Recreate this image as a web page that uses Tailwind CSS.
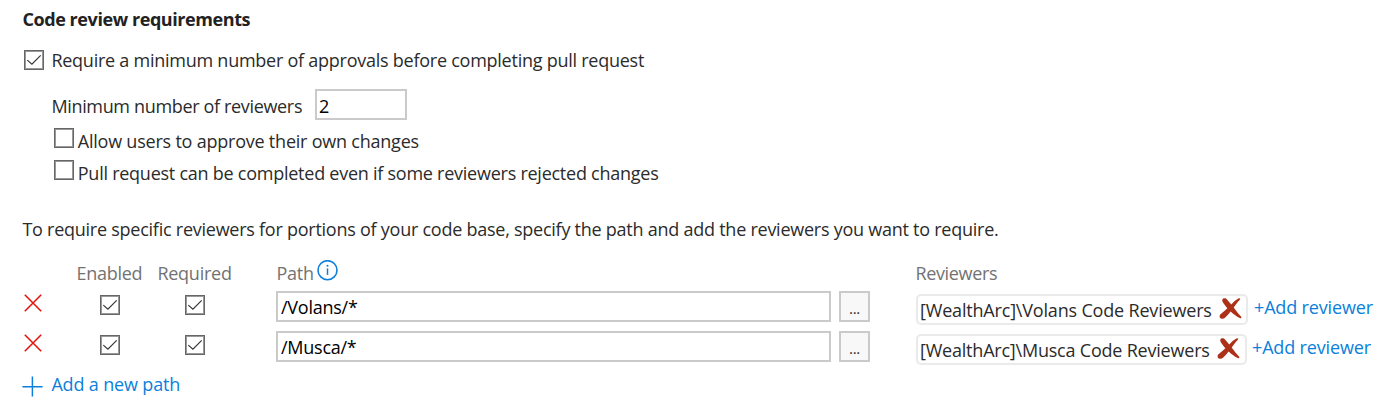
<!DOCTYPE html>
<html lang="en">
<head>
<meta charset="utf-8">
<title>Code review requirements</title>
<script src="https://cdn.jsdelivr.net/npm/@tailwindcss/browser@4"></script>
</head>
<body class="bg-white">
<svg class="hidden">
  <symbol id="check" viewBox="0 0 20 20"><path d="M3.3 10.1 L7.9 14.1 L16.7 5.3" fill="none" stroke="#333" stroke-width="1.15"/></symbol>
  <symbol id="cross" viewBox="0 0 18 18"><path d="M.8 .8 L17.2 17.2 M17.2 .8 L.8 17.2" fill="none" stroke="#e3170d" stroke-width="1.6"/></symbol>
  <symbol id="remove" viewBox="0 0 23 22"><path d="M3.9 .8 C5.5 -.1 7.5 .5 8.4 1.9 L12.3 6.5 C14.5 4 16.7 2.1 19.4 .6 C20.5 0 21.6 .6 21 1.6 C18.5 4.3 16.6 6.8 14.7 9.6 C16.8 12.8 19.5 15.8 22.2 18.8 C22.8 19.8 21.8 20.6 20.7 20 C17.3 18.4 14.4 16.1 11.7 13.5 C9.7 15.8 7.8 18.3 5.7 20 C4.3 21.1 1.6 20.9 .8 19.4 C.2 18 .8 16.7 2.1 15.7 C4.3 14 6.4 12.2 8.4 10.2 C6.6 8.1 4.8 6 3.7 4 C3 2.7 3.1 1.5 3.9 .8 Z" fill="#ad3019"/></symbol>
</svg>
<main class="h-[408px] w-[1388px] overflow-hidden pt-[7px] pl-[22.4px] font-['Open_Sans','Noto_Sans',sans-serif] text-[18px] leading-6 tracking-[-0.25px] whitespace-nowrap text-[#2b2b2b]">
  <h1 class="h-[41px] font-bold tracking-[-0.42px] text-[#222]">Code review requirements</h1>

  <label class="flex h-[41px] items-start">
    <span class="mt-[2px] ml-[1.6px] size-5 border border-[#666] outline -outline-offset-2 outline-[#999]"><svg class="-mt-px -ml-px size-5"><use href="#check"/></svg></span>
    <span class="ml-[7.4px]">Require a minimum number of approvals before completing pull request</span>
  </label>

  <div class="flex h-[38px] items-start pl-[29px]">
    <span class="mt-[5px] w-[263.6px] tracking-[-0.34px]">Minimum number of reviewers</span>
    <div class="h-[31px] w-[92px] border-2 border-[#cacaca] pt-[3px] pl-[2px] text-black">2</div>
  </div>
  <label class="flex h-[32px] items-start pl-[31.2px]">
    <span class="mt-px size-5 border border-[#666] outline -outline-offset-2 outline-[#999]"></span>
    <span class="mt-[2px] ml-[4.2px] tracking-[-0.22px]">Allow users to approve their own changes</span>
  </label>
  <label class="flex h-[58px] items-start pl-[31.2px]">
    <span class="mt-px size-5 border border-[#666] outline -outline-offset-2 outline-[#999]"></span>
    <span class="mt-[2px] ml-[4.2px] tracking-[-0.25px]">Pull request can be completed even if some reviewers rejected changes</span>
  </label>

  <p class="h-[44px]">To require specific reviewers for portions of your code base, specify the path and add the reviewers you want to require.</p>

  <div class="flex h-[30px] text-[#727272]">
    <span class="w-[80px] pl-[54px]">Enabled</span>
    <span class="w-[174px] pl-[55px]">Required</span>
    <span class="w-[639px]"><span class="flex">Path<svg class="-mt-px ml-[3.4px] size-[21px]" viewBox="0 0 21 21"><circle cx="10.5" cy="10.2" r="9.5" fill="none" stroke="#0b7fdb" stroke-width="1.6"/><path d="M10.5 8.4 V14.9" stroke="#0b7fdb" stroke-width="1.5"/><circle cx="10.5" cy="5.8" r="1" fill="#0b7fdb"/></svg></span></span>
    <span class="tracking-[-0.34px]">Reviewers</span>
  </div>

  <div class="flex h-[40px] items-start">
    <svg class="mt-[3px] ml-[1.6px] size-[18px]"><use href="#cross"/></svg>
    <span class="mt-[4px] ml-[58px] size-5 border border-[#666] outline -outline-offset-2 outline-[#999]"><svg class="-mt-px -ml-px size-5"><use href="#check"/></svg></span>
    <span class="mt-[4px] ml-[65px] size-5 border border-[#666] outline -outline-offset-2 outline-[#999]"><svg class="-mt-px -ml-px size-5"><use href="#check"/></svg></span>
    <div class="ml-[71px] h-[31px] w-[555px] border-2 border-[#cacaca] pt-[2px] pl-[3px] text-black">/Volans/*</div>
    <button class="ml-2 h-[31px] w-[31px] border-2 border-[#cacaca] bg-[#f8f8f8] pt-px text-[15px] leading-[28px]">...</button>
    <div class="mt-[3px] ml-[46px] flex h-[31px] w-[332px] rounded-[5px] border-2 border-[#eaeaea] pt-[2px] pl-[2px] tracking-[-0.18px]"><span class="w-[299px]">[WealthArc]\Volans Code Reviewers</span><svg class="h-[22px] w-[23px]"><use href="#remove"/></svg></div>
    <a class="mt-[4px] ml-[6px] tracking-[-0.15px] text-[#0b7fdb]">+Add reviewer</a>
  </div>

  <div class="flex h-[41px] items-start">
    <svg class="mt-[3px] ml-[1.6px] size-[18px]"><use href="#cross"/></svg>
    <span class="mt-[4px] ml-[58px] size-5 border border-[#666] outline -outline-offset-2 outline-[#999]"><svg class="-mt-px -ml-px size-5"><use href="#check"/></svg></span>
    <span class="mt-[4px] ml-[65px] size-5 border border-[#666] outline -outline-offset-2 outline-[#999]"><svg class="-mt-px -ml-px size-5"><use href="#check"/></svg></span>
    <div class="ml-[71px] h-[31px] w-[555px] border-2 border-[#cacaca] pt-[2px] pl-[3px] text-black">/Musca/*</div>
    <button class="ml-2 h-[31px] w-[31px] border-2 border-[#cacaca] bg-[#f8f8f8] pt-px text-[15px] leading-[28px]">...</button>
    <div class="mt-[3px] ml-[46px] flex h-[31px] w-[331px] rounded-[5px] border-2 border-[#eaeaea] pt-[2px] pl-[2px] tracking-[-0.21px]"><span class="w-[297px]">[WealthArc]\Musca Code Reviewers</span><svg class="h-[22px] w-[23px]"><use href="#remove"/></svg></div>
    <a class="mt-[4px] ml-[5px] tracking-[-0.15px] text-[#0b7fdb]">+Add reviewer</a>
  </div>

  <a class="flex text-[#0b7fdb]">
    <svg class="mt-[4px] -ml-[.4px] size-[21px]" viewBox="0 0 21 21"><path d="M.4 10.7 H20.6 M10.4 .6 V20.4" stroke="#0b7fdb" stroke-width="1.5"/></svg>
    <span class="ml-[8.4px] tracking-[-0.16px]">Add a new path</span>
  </a>
</main>
</body>
</html>
